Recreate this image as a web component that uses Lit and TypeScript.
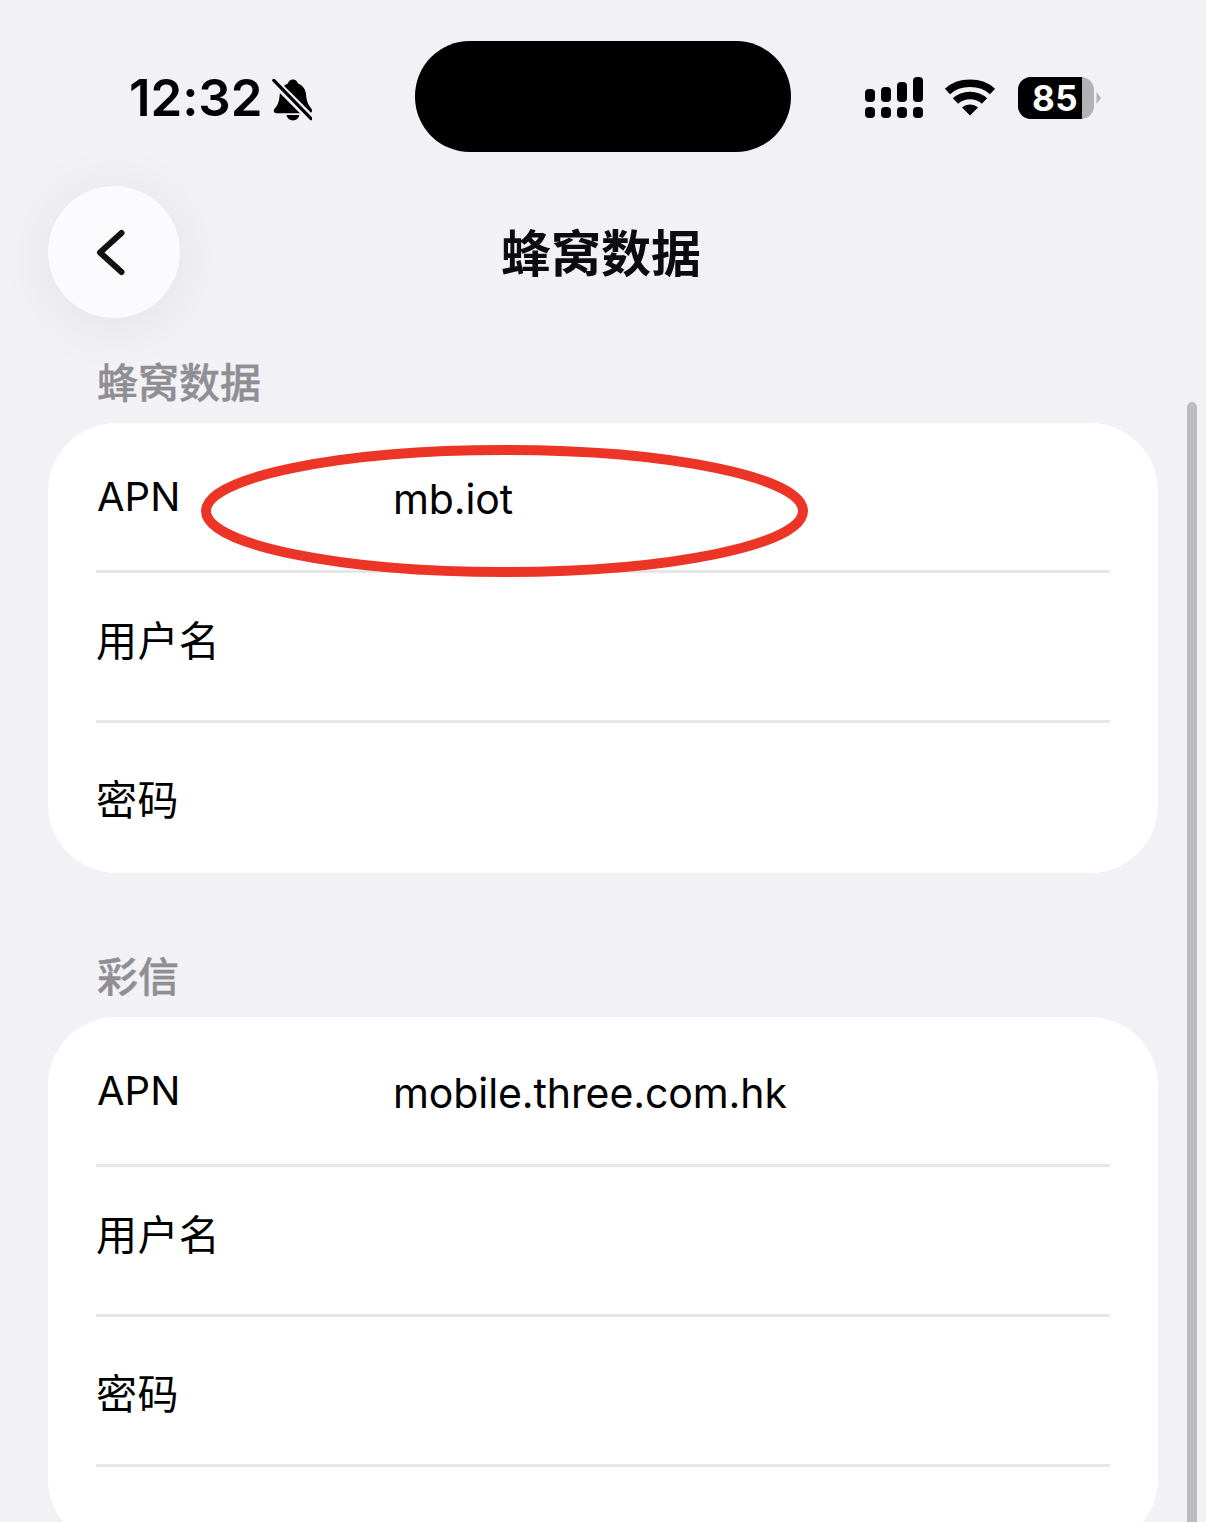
import { LitElement, html, css, svg } from "lit";
import { customElement } from "lit/decorators.js";

@customElement("app-root")
export class AppRoot extends LitElement {
  static styles = css`
    :host { display: block; width: 1206px; height: 1522px; overflow: hidden; position: relative; background: #f1f1f6; font-family: Inter, "Noto Sans CJK SC", sans-serif; color: #000; }
    .status { height: 186px; box-sizing: border-box; padding: 41px 0 0 0; display: grid; grid-template-columns: 415px 376px 1fr; align-items: start; }
    .left { display: flex; align-items: center; height: 111px; padding-left: 129px; gap: 10px; }
    .time { font-size: 51px; font-weight: 600; color: #000; letter-spacing: -0.1px; line-height: 1; margin-top: 2px; }
    .bell { width: 40px; height: 43px; margin-top: 5px; }
    .island { width: 376px; height: 111px; border-radius: 55px; background: #000; }
    .right { display: flex; align-items: flex-start; padding: 36px 0 0 73px; gap: 20px; }
    .right svg { display: block; }
    .sig { width: 60px; height: 42px; }
    .wifi { width: 52px; height: 40px; }
    .batt { position: relative; width: 83px; height: 42px; margin-left: 2px; }
    .batt svg { position: absolute; inset: 0; }
    .batt span { position: absolute; left: 0; top: 0; width: 74px; height: 42px; display: flex; align-items: center; justify-content: center; color: #fff; font-size: 35px; font-weight: 700; line-height: 1; letter-spacing: 0.5px; }
    .head { display: grid; grid-template-columns: 132px 1fr 132px; padding: 0 48px; height: 132px; align-items: center; }
    .back { width: 132px; height: 132px; border-radius: 50%; background: #fbfbfd; box-shadow: 0 6px 60px rgba(0,0,0,.07); display: flex; align-items: center; justify-content: center; }
    .back svg { width: 132px; height: 132px; }
    h1 { margin: 3px 4px 0 0; text-align: center; font-size: 50px; font-weight: 700; line-height: 1; color: #0c0c0e; }
    .content { padding: 0 48px; }
    .label { padding: 0 0 0 49px; font-size: 41px; font-weight: 500; line-height: 50px; color: #8e8e93; -webkit-text-stroke: .4px #8e8e93; }
    .first { margin-top: 40px; height: 65px; }
    .second { margin-top: 79px; height: 65px; }
    .card { background: #fff; border-radius: 68px; padding: 0 48px; }
    .row { display: grid; grid-template-columns: 297px 1fr; box-sizing: border-box; height: 150px; line-height: 48px; border-bottom: 3px solid #e7e7ea; align-items: start; }
    .row.apn { padding-top: 50px; }
    .row.user { padding-top: 44px; }
    .row.pwd { padding-top: 53px; border-bottom: 0; }
    .row.pwd.more { border-bottom: 3px solid #e7e7ea; }
    .name { font-size: 40px; margin-left: 1px; font-weight: 400; }
    .name.cjk { font-size: 41px; margin-left: 0; letter-spacing: .4px; }
    .val { font-size: 41px; margin-top: 2px; letter-spacing: -.1px; }
    .tail { height: 80px; }
    .bar { position: absolute; left: 1187px; top: 402px; width: 10px; height: 1140px; border-radius: 5px; background: #bcbcc1; }
    .mark { position: absolute; left: 195px; top: 440px; width: 620px; height: 142px; }
  `;

  private card(val: string, more: boolean) {
    return html`<div class="card">
      <div class="row apn"><span class="name">APN</span><span class="val">${val}</span></div>
      <div class="row user"><span class="name cjk">用户名</span></div>
      <div class="row pwd ${more ? "more" : ""}"><span class="name cjk">密码</span></div>
      ${more ? html`<div class="tail"></div>` : ""}
    </div>`;
  }

  render() {
    return html`
      <div class="status">
        <div class="left">
          <span class="time">12:32</span>
          <svg class="bell" viewBox="0 0 44 46">
            <path fill="#000" d="M23 1c3 0 5 2 5.500 4.500C34 7.500 37 12 37.500 18c.4 5 1.500 9 3.500 12 1.500 2.500 3.500 3.500 3 6-.3 1.500-1.500 2-3 2H5c-1.500 0-2.800-.6-3-2-.4-2.500 2-4 3.500-6.500 1.800-3 2.500-6.500 3-11.500C9 12 12.500 7.500 17.500 5.500 18 3 20 1 23 1z"/>
            <path fill="#000" d="M16 40h14c-.5 3.500-3.500 6-7 6s-6.500-2.500-7-6z"/>
            <path stroke="#f1f1f6" stroke-width="9" d="M2 3 44 45"/>
            <path stroke="#000" stroke-width="3.600" stroke-linecap="round" d="M2 2 43 44"/>
          </svg>
        </div>
        <div class="island"></div>
        <div class="right">
          <svg class="sig" viewBox="0 0 60 42" fill="#000">
            <rect x="1" y="12" width="10" height="13" rx="4"/><rect x="17" y="10" width="10" height="15" rx="4"/>
            <rect x="33" y="5" width="10" height="20" rx="4"/><rect x="49" y="0" width="10" height="25" rx="4"/>
            <rect x="1" y="30" width="10" height="11" rx="4"/><rect x="17" y="30" width="10" height="11" rx="4"/>
            <rect x="33" y="30" width="10" height="11" rx="4"/><rect x="49" y="30" width="10" height="11" rx="4"/>
          </svg>
          <svg class="wifi" viewBox="0 0 52 40">
            ${svg`<path fill="none" stroke="#000" stroke-width="7.500" d="M3.500 14.500C15 3.500 37 3.500 48.500 14.500"/>
            <path fill="none" stroke="#000" stroke-width="7.500" d="M11.500 24C19 16.500 33 16.500 40.500 24"/>
            <path fill="#000" d="M18 30.500c4.500-4 11.500-4 16 0L26 38.500z"/>`}
          </svg>
          <div class="batt">
            <svg viewBox="0 0 83 42" width="83" height="42">
              <rect x="0" y="0" width="76" height="42" rx="13" fill="#b2b2b4"/>
              <path d="M13 0H64V42H13A13 13 0 0 1 0 29V13A13 13 0 0 1 13 0z" fill="#000"/>
              <path d="M78.500 15 83 21 78.500 27z" fill="#b2b2b4"/>
            </svg>
            <span>85</span>
          </div>
        </div>
      </div>
      <div class="head">
        <div class="back">
          <svg viewBox="0 0 132 132"><path fill="none" stroke="#111114" stroke-width="6" stroke-linecap="round" stroke-linejoin="round" d="M73.500 47 52 66.500 73.500 86"/></svg>
        </div>
        <h1>蜂窝数据</h1>
        <div></div>
      </div>
      <div class="content">
        <div class="label first">蜂窝数据</div>
        ${this.card("mb.iot", false)}
        <div class="label second">彩信</div>
        ${this.card("mobile.three.com.hk", true)}
      </div>
      <div class="bar"></div>
      <svg class="mark" viewBox="0 0 620 142"><ellipse cx="309.500" cy="71" rx="298.500" ry="61" fill="none" stroke="#ec3526" stroke-width="10"/></svg>
    `;
  }
}
